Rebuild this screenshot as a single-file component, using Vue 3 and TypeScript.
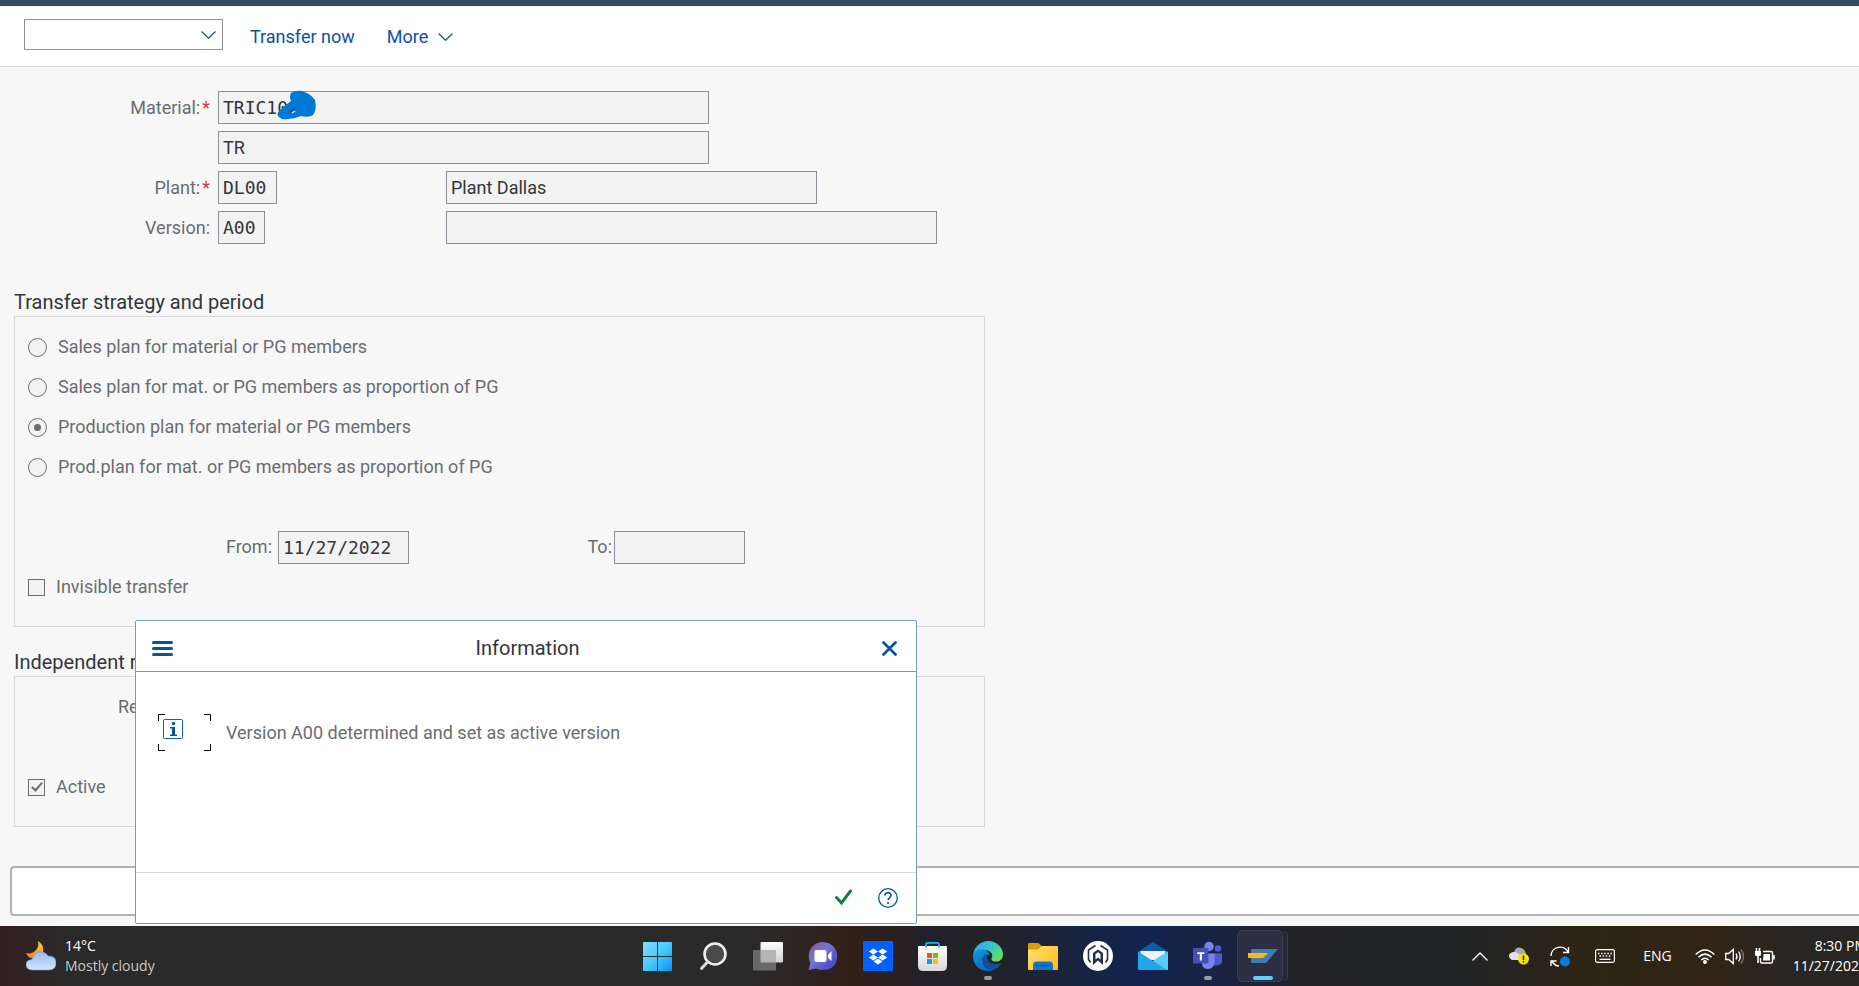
<script setup lang="ts">
import { ref } from 'vue'

interface Strategy {
  id: string
  label: string
}

const strategies: Strategy[] = [
  { id: 'sales', label: 'Sales plan for material or PG members' },
  { id: 'sales-prop', label: 'Sales plan for mat. or PG members as proportion of PG' },
  { id: 'prod', label: 'Production plan for material or PG members' },
  { id: 'prod-prop', label: 'Prod.plan for mat. or PG members as proportion of PG' },
]

const strategy = ref('prod')
const invisible = ref(false)
const active = ref(true)
const command = ref('')
</script>

<template>
  <div class="page">
    <header class="toolbar">
      <div class="combo">
        <select v-model="command" aria-label="Command">
          <option value=""></option>
        </select>
        <svg class="combo-arrow" width="15" height="8" viewBox="0 0 15 8"><path d="M.5 .5 7.5 7.3 14.5 .5" /></svg>
      </div>
      <button class="tool" type="button">Transfer now</button>
      <button class="tool more" type="button">
        More
        <svg width="15" height="8" viewBox="0 0 15 8"><path d="M.5 .5 7.5 7.3 14.5 .5" /></svg>
      </button>
    </header>

    <main class="content">
      <form class="head-form" @submit.prevent>
        <label for="material">Material:<span class="req">*</span></label>
        <div class="wide masked">
          <input id="material" class="field w-long mono" value="TRIC10" readonly />
          <svg class="scribble" width="40" height="32" viewBox="0 0 40 32">
            <path fill="#0078d7" d="M14 3Q18 0 25 1Q34 4 38 10Q40 20 36 25Q32 28 24 26Q15 30 5 29Q-2 26 2 21Q8 15 14 11Q12 6 14 3Z" />
            <path d="M13 22l4-3 1 1" fill="none" stroke="#243d5c" stroke-width="1.2" />
            <path d="M15 23l3-2" stroke="#f2f2f2" stroke-width="1.2" />
            <path d="M31 18l1-1" stroke="#2f5f96" />
          </svg>
        </div>

        <input class="field w-long below" value="TR" aria-label="Material description" readonly />

        <label for="plant">Plant:<span class="req">*</span></label>
        <input id="plant" class="field w-plant mono" value="DL00" readonly />
        <input class="field w-name" value="Plant Dallas" aria-label="Plant name" readonly />

        <label for="version">Version:</label>
        <input id="version" class="field w-version mono" value="A00" readonly />
        <input class="field w-long" value="" aria-label="Version description" readonly />
      </form>

      <section class="group first">
        <h2>Transfer strategy and period</h2>
        <div class="box">
          <label v-for="s in strategies" :key="s.id" class="row option">
            <input v-model="strategy" type="radio" name="strategy" :value="s.id" />
            <span>{{ s.label }}</span>
          </label>
          <div class="row"></div>
          <div class="row period">
            <label class="from" for="from">From:</label>
            <input id="from" class="field w-date mono" value="11/27/2022" readonly />
            <label class="to" for="to">To:</label>
            <input id="to" class="field w-date mono" value="" readonly />
          </div>
          <label class="row option">
            <input v-model="invisible" type="checkbox" />
            <span>Invisible transfer</span>
          </label>
        </div>
      </section>

      <section class="group">
        <h2>Independent requirements</h2>
        <div class="box">
          <div class="row reqtype">Requirements type:</div>
          <div class="row"></div>
          <label class="row option">
            <input v-model="active" type="checkbox" />
            <span>Active</span>
          </label>
        </div>
      </section>

      <div class="status" role="status"></div>

      <section class="dialog" role="dialog" aria-labelledby="dialog-title">
        <header class="dialog-head">
          <button type="button" aria-label="Menu">
            <svg width="21" height="15" viewBox="0 0 21 15"><path d="M1.5 1.5h18M1.5 7.5h18M1.5 13.5h18" stroke="#0854a0" stroke-width="3" stroke-linecap="round" /></svg>
          </button>
          <h3 id="dialog-title">Information</h3>
          <button type="button" aria-label="Close">
            <svg width="15" height="15" viewBox="0 0 15 15"><path d="M1.5 1.5l12 12M13.5 1.5l-12 12" stroke="#0854a0" stroke-width="2.8" stroke-linecap="round" /></svg>
          </button>
        </header>
        <div class="dialog-body">
          <svg width="53" height="37" viewBox="0 0 53 37" fill="none">
            <path d="M7 .5H.5V7M46 .5h6.500V7M.5 30v6.500H7M52.500 30v6.500H46" stroke="#000" />
            <rect x="5.500" y="5.500" width="19" height="19" rx="1" stroke="#0a63b4" />
            <circle cx="15.500" cy="9.500" r="1.700" fill="#0854a0" />
            <path d="M12 13h5v7.500h2V22h-7v-1.500h2V14.500h-2Z" fill="#0854a0" />
          </svg>
          <p>Version A00 determined and set as active version</p>
        </div>
        <footer class="dialog-foot">
          <button type="button" aria-label="Continue">
            <svg width="17" height="17" viewBox="0 0 17 17"><path d="M1.500 8.500 6.500 14 15.500 2" fill="none" stroke="#107e3e" stroke-width="3" stroke-linecap="round" /></svg>
          </button>
          <button type="button" aria-label="Help">
            <svg width="20" height="20" viewBox="0 0 20 20" fill="none" stroke="#0854a0">
              <circle cx="10" cy="10" r="9.300" stroke-width="1.300" />
              <path d="M6.900 7.600C6.900 3.700 13.100 3.800 13.100 7.300C13.100 9.500 10.100 9.600 10.100 12.300" stroke-width="1.600" />
              <circle cx="10.100" cy="15" r="1.100" fill="#0854a0" stroke="none" />
            </svg>
          </button>
        </footer>
      </section>
    </main>

    <footer class="taskbar">
      <button class="weather" type="button">
        <svg width="30" height="30" viewBox="0 0 30 30">
          <defs>
            <linearGradient id="moon" x1="0" y1="1" x2="1" y2="0"><stop offset="0" stop-color="#f47c16" /><stop offset="1" stop-color="#f7c948" /></linearGradient>
            <linearGradient id="cloud" x1="0" y1="0" x2="0" y2="1"><stop offset="0" stop-color="#98b8f1" /><stop offset="1" stop-color="#d2e5fb" /></linearGradient>
          </defs>
          <path d="M12 0C19 4 19 13 13 16Q3 20 0 12C7 14 14 8 12 0Z" fill="url(#moon)" />
          <path d="M6 29Q0 28.500 0 23.500Q0 19 6 18.500Q8 11 15 11Q20 11 22 15Q30 14.500 30 22Q30 29 23 29Z" fill="url(#cloud)" stroke="#779de2" stroke-width=".6" />
        </svg>
        <span class="weather-text"><span>14°C</span><span class="dim">Mostly cloudy</span></span>
      </button>

      <nav class="apps" aria-label="Applications">
        <button type="button" aria-label="Start">
          <svg viewBox="0 0 30 30"><defs><linearGradient id="win" x1="0" y1="0" x2="1" y2="1"><stop offset="0" stop-color="#83dcff" /><stop offset=".5" stop-color="#49c9fb" /><stop offset="1" stop-color="#0a8fff" /></linearGradient></defs><path d="M0 2q0-1 1-1h13v14H0ZM15 1h13q1 0 1 1v13H15ZM0 16h14v14H1q-1 0-1-1ZM15 16h14v13q0 1-1 1H15Z" fill="url(#win)" /></svg>
        </button>
        <button type="button" aria-label="Search">
          <svg viewBox="0 0 30 30"><circle cx="17" cy="13" r="10.500" fill="#4a4a4a" stroke="#eceff1" stroke-width="2.600" /><path d="M9.500 21 3.500 27.500" stroke="#d9dde0" stroke-width="3" stroke-linecap="round" /></svg>
        </button>
        <button type="button" aria-label="Task view">
          <svg viewBox="0 0 30 30"><defs><linearGradient id="tv" x1="0" y1="0" x2="0" y2="1"><stop offset="0" stop-color="#fff" /><stop offset="1" stop-color="#cfcfcf" /></linearGradient></defs><rect x="7.500" y="1" width="22.500" height="20.500" rx="1" fill="url(#tv)" /><rect y="9" width="23" height="20.500" rx="1" fill="#696969" /><path d="M7.500 9H22q1 0 1 1V21.500H8.500q-1 0-1-1Z" fill="#b5b5b5" /></svg>
        </button>
        <button type="button" aria-label="Chat">
          <svg viewBox="0 0 30 30"><defs><linearGradient id="chat" x1=".1" y1=".1" x2=".8" y2=".8"><stop offset="0" stop-color="#8a5ca4" /><stop offset=".45" stop-color="#7177d6" /><stop offset="1" stop-color="#4f4fc6" /></linearGradient></defs><path d="M15 1C34 2 34 29 15 29Q11 29 8 27.500L1.500 29Q.5 29 .7 28L2.500 22C-2.500 12 4 1 15 1Z" fill="url(#chat)" /><rect x="6.500" y="9" width="12" height="12" rx="2" fill="#fff" /><path d="M20 14l3.500-4v10L20 17Z" fill="#fff" /></svg>
        </button>
        <button type="button" aria-label="Dropbox">
          <svg viewBox="0 0 30 30"><path d="M0 0h30v30H0Z" fill="#0061fe" /><path d="M10.400 7.500 15 10.500l-4.600 3-4.600-3ZM19.600 7.500l4.600 3-4.600 3-4.600-3ZM10.400 13.500l4.600 3-4.600 3-4.600-3ZM19.600 13.500l4.600 3-4.600 3-4.600-3ZM15 17.500l4.600 3-4.600 2.900-4.600-2.900Z" fill="#fff" /></svg>
        </button>
        <button type="button" aria-label="Store">
          <svg viewBox="0 0 30 30"><defs><linearGradient id="bag" x1="0" y1="0" x2="0" y2="1"><stop offset="0" stop-color="#fff" /><stop offset="1" stop-color="#d7d7d7" /></linearGradient></defs><path d="M0 6q0-1 1-1h27q1 0 1 1v19q0 5-5 5H5q-5 0-5-5Z" fill="url(#bag)" /><path d="M8 6.500V3.500Q8 1.800 9.800 1.800h9.400q1.800 0 1.800 1.700v3" fill="none" stroke="#1eb8ee" stroke-width="1.700" /><path d="M9 12h5v5H9Z" fill="#f25022" /><path d="M15 12h5v5h-5Z" fill="#7fba00" /><path d="M9 18h5v5H9Z" fill="#00a4ef" /><path d="M15 18h5v5h-5Z" fill="#ffb900" /></svg>
        </button>
        <button class="running" type="button" aria-label="Edge">
          <svg viewBox="0 0 30 30"><defs><linearGradient id="edge1" x1="0" y1=".2" x2="1" y2=".7"><stop offset="0" stop-color="#2aa8f2" /><stop offset=".5" stop-color="#36c5cc" /><stop offset="1" stop-color="#66e04e" /></linearGradient><linearGradient id="edge2" x1="0" y1="0" x2=".5" y2="1"><stop offset="0" stop-color="#1597e8" /><stop offset="1" stop-color="#0b6dc4" /></linearGradient></defs><path d="M.5 12C2 5 8 0 15 0C24 0 30 7 30 13C30 19 26 21 22 20.500Q18 20 18.500 17.500C21 13 17 9 11 9Q4 9 .5 14Z" fill="url(#edge1)" /><path d="M0 15C2 8 8 7.500 12 9Q16 11 17 14Q12 13 11 17.500C10 22 14 27 20 29.500C8 32 0 25 0 15Z" fill="url(#edge2)" /><path d="M14 12.500Q8.500 15 9 20C10 27 15 30 20 29.300Q25 27.500 28 23Q28 21.500 26 22.500C19 25 12.500 20 14 12.500Z" fill="#10509c" /></svg>
        </button>
        <button type="button" aria-label="File explorer">
          <svg viewBox="0 0 30 30"><defs><linearGradient id="folder" x1="0" y1="0" x2="1" y2="1"><stop offset="0" stop-color="#ffe07a" /><stop offset="1" stop-color="#fdbc13" /></linearGradient></defs><path d="M0 3q0-1 1-1h9q1 0 2 1.500l1.500 1.500v6H0Z" fill="#dd9c06" /><path d="M0 8.500h10L13.500 5H29q1 0 1 1v22q0 1-1 1H1q-1 0-1-1Z" fill="url(#folder)" /><path d="M5 29v-5q0-3.500 3.500-3.500h13q3.500 0 3.500 3.500v5Z" fill="#1576c9" /><path d="M8.500 24.700h13" stroke="#0a4b8c" stroke-width="1.200" /></svg>
        </button>
        <button type="button" aria-label="Launcher">
          <svg viewBox="0 0 30 30" fill="none" stroke="#23304d"><circle cx="15" cy="15" r="15" fill="#fff" stroke="none" /><path d="M12.500 4.500 5.500 9v9.500l2 3M17.500 4.500l7 4.500v9.500l-2 3" stroke-width="1.600" /><path d="M10 24V12l5-3.500L20 12v12l-5-4.500Z" fill="#23304d" stroke="none" /><path d="M12.500 18.500V13L15 11.300l2.500 1.700v5.500L15 16.500Z" fill="#fff" stroke="none" /></svg>
        </button>
        <button type="button" aria-label="Mail">
          <svg viewBox="0 0 30 30"><path d="M0 10.500 15 1l15 9.500v5H0Z" fill="#0f5bab" /><path d="M2.500 10h25v9H2.500Z" fill="#f2f2f2" /><path d="M0 10.500 15 20 30 10.500V28q0 1-1 1H1q-1 0-1-1Z" fill="#22a7ec" /><path d="M30 10.500 15 20l14 9q1 0 1-1Z" fill="#50d0fa" /></svg>
        </button>
        <button class="running" type="button" aria-label="Teams">
          <svg viewBox="0 0 30 30"><circle cx="25" cy="7.500" r="3.200" fill="#5059c9" /><circle cx="16" cy="5.500" r="4.700" fill="#7b83eb" /><path d="M20 12.500h9v7q0 5-6 5h-3Z" fill="#5059c9" /><path d="M9 12.500h12.500V21Q21 28 15 28T9 22Z" fill="#7b83eb" /><rect y="7" width="15.500" height="15.500" rx="1" fill="#474fb8" /><path d="M4.300 11.300h7v1.800H8.800v6.500h-2v-6.500H4.300Z" fill="#fff" /></svg>
        </button>
        <button class="current" type="button" aria-label="SAP GUI">
          <svg viewBox="0 0 30 30"><path d="M3 8h27L18 22H3Z" fill="#427cac" /><path d="M0 12h20l-5 5H0Z" fill="#ffb81c" /></svg>
        </button>
      </nav>

      <div class="tray">
        <button type="button" aria-label="Show hidden icons"><svg width="16" height="9" viewBox="0 0 16 9"><path d="M.5 8.500 8 1l7.500 7.500" fill="none" stroke="#fff" stroke-width="1.300" /></svg></button>
        <button type="button" aria-label="OneDrive"><svg width="20" height="20" viewBox="0 0 20 20"><path d="M3 14Q-1 12 .5 8Q3 6 5 6Q7 0 12 2Q16 3 17 8v6Z" fill="#a9a9a9" /><path d="M3 14Q-1 12 .5 8Q5 4 10 8l4 2v4Z" fill="#e1e1e1" /><circle cx="14.500" cy="13" r="5.500" fill="#ffe100" /><path d="M14.500 9.500v4.500M14.500 15v1.500" stroke="#222" stroke-width="1.500" /></svg></button>
        <button type="button" aria-label="Sync"><svg width="20" height="21" viewBox="0 0 20 21"><path d="M1 10A9 9 0 0 1 18 6M18.500 1v5.500H13M1 20v-5h5.500M2 15.500Q5 20 9 20" fill="none" stroke="#fff" stroke-width="1.400" /><circle cx="15" cy="15.500" r="5" fill="#0a7be0" /></svg></button>
        <button class="keyboard" type="button" aria-label="Touch keyboard"><svg width="20" height="14" viewBox="0 0 20 14" fill="none" stroke="#fff"><rect x=".6" y=".6" width="18.800" height="12.800" rx="1.800" stroke-width="1.200" /><path d="M3 4.500h14M4.500 7h11" stroke-width="1.500" stroke-dasharray="1.500 1.600" /><path d="M4.500 10.300h11" stroke-width="1.300" /></svg></button>
        <button class="lang" type="button">ENG</button>
        <button class="net" type="button" aria-label="Network, volume and battery">
          <svg width="20" height="15" viewBox="0 0 20 15" fill="none" stroke="#fff" stroke-width="1.500"><path d="M.7 5.500Q10-3.500 19.300 5.500M3.500 8.300Q10 2 16.500 8.300M6.300 11Q10 7.500 13.700 11" /><circle cx="10" cy="13" r="1.200" fill="#fff" /></svg>
          <svg width="20" height="17" viewBox="0 0 20 17" fill="none" stroke="#fff" stroke-width="1.300"><path d="M.7 5.500h3L8.300 1.500v14L3.700 11.500h-3Z" /><path d="M11 5.500q2 3 0 6M13.500 3.500q3.500 5 0 10" /><path d="M16 1.500q5 7 0 14" stroke="#777" /></svg>
          <svg width="20" height="17" viewBox="0 0 20 17" fill="none" stroke="#fff"><path d="M8 3.500h8q1.500 0 1.500 1.500v8.500q0 1.500-1.500 1.500H7q-1.500 0-1.500-1.500V10" stroke-width="1.400" /><path d="M8.500 6H15v6.500H8Z" fill="#fff" stroke="none" /><path d="M0 3h6v3.500q0 1.500-1.500 1.500h-3Q0 8 0 6.500Z" fill="#fff" stroke="none" /><path d="M1.500 0v3M4.500 0v3M3 8v7M19 7v4.500" stroke-width="1.600" /></svg>
        </button>
        <button class="clock" type="button"><span>8:30 PM</span><span>11/27/2022</span></button>
      </div>
    </footer>
  </div>
</template>

<style>
html,
body {
  margin: 0;
  overflow: hidden;
}
</style>

<style scoped>
.page {
  display: flex;
  flex-direction: column;
  min-height: 100vh;
  overflow: hidden;
  background: #f7f7f7;
  color: #32363a;
  font: 18px/24px Roboto, "Liberation Sans", sans-serif;
}
button,
input,
select {
  box-sizing: border-box;
  margin: 0;
  font: inherit;
  color: inherit;
}
button {
  display: flex;
  align-items: center;
  padding: 0;
  border: 0;
  background: none;
}
svg {
  display: block;
  flex: none;
}
h2,
h3,
p {
  margin: 0;
  font-weight: 400;
}
h2,
h3 {
  font-size: 20px;
}
.toolbar {
  display: flex;
  align-items: center;
  height: 60px;
  padding: 0 24px;
  border-top: 6px solid #354a5f;
  border-bottom: 1px solid #d9d9d9;
  background: #fff;
}
.combo {
  position: relative;
  width: 199px;
  margin: 0 27px 3px 0;
}
.combo select {
  display: block;
  appearance: none;
  width: 100%;
  height: 31px;
  border: 1px solid #89919a;
  border-radius: 0;
  background: #fff;
}
.combo-arrow {
  position: absolute;
  right: 7px;
  top: 12px;
  pointer-events: none;
}
.toolbar path {
  fill: none;
  stroke: #0854a0;
  stroke-width: 1.2;
}
.tool {
  gap: 10px;
  padding-top: 2px;
  color: #0854a0;
}
.more {
  margin-left: 32px;
}
.content {
  position: relative;
  flex: 1;
}
.head-form {
  display: grid;
  grid-template-columns: 210px 220px auto;
  gap: 7px 8px;
  padding-top: 24px;
  align-items: center;
}
.head-form label {
  text-align: right;
}
label,
.reqtype,
.dialog-body p {
  color: #6a6d70;
}
.req {
  margin-left: 2px;
  color: #d0393c;
}
.wide,
.below {
  grid-column: 2 / 4;
}
.masked {
  position: relative;
}
.scribble {
  position: absolute;
  left: 59px;
  top: -1px;
}
.field {
  display: block;
  height: 33px;
  padding: 0 4px;
  border: 1px solid #89919a;
  border-radius: 0;
  background: #f2f2f2;
  outline: 0;
}
.mono {
  font-family: "DejaVu Sans Mono", "Liberation Mono", monospace;
}
.w-long {
  width: 491px;
}
.w-name {
  width: 371px;
}
.w-plant {
  width: 59px;
}
.w-version {
  width: 47px;
}
.w-date {
  width: 131px;
}
.group {
  width: 971px;
  margin: 23px 0 0 14px;
}
.group.first {
  margin-top: 46px;
}
.box {
  margin-top: 2px;
  padding: 10px 13px 19px;
  border: 1px solid #d9d9d9;
}
.row {
  display: flex;
  align-items: center;
  height: 40px;
}
.option {
  gap: 11px;
}
.option input {
  display: grid;
  place-items: center;
  appearance: none;
  width: 17px;
  height: 17px;
  border: 1px solid #6a6d70;
  background: #f2f2f2;
}
.option input[type="radio"] {
  width: 19px;
  height: 19px;
  border-radius: 50%;
}
.option input[type="radio"]:checked::before {
  content: "";
  width: 7px;
  height: 7px;
  border-radius: 50%;
  background: #6a6d70;
}
.option input[type="checkbox"]:checked::before {
  content: "";
  width: 4px;
  height: 9px;
  margin-bottom: 3px;
  border: solid #6a6d70;
  border-width: 0 2px 2px 0;
  transform: rotate(40deg);
}
.from {
  width: 244px;
  margin-right: 6px;
  text-align: right;
}
.to {
  width: 203px;
  margin-right: 2px;
  text-align: right;
}
.reqtype {
  padding-left: 90px;
}
.status {
  height: 46px;
  margin: 39px 0 9px 10px;
  border: 2px solid #b2b2b2;
  border-right: 0;
  border-radius: 4px 0 0 4px;
  background: #fff;
}
.dialog {
  position: absolute;
  left: 135px;
  bottom: 2px;
  width: 780px;
  border: 1px solid #7b98b8;
  border-radius: 2px;
  background: #fff;
}
.dialog-head {
  display: flex;
  align-items: center;
  justify-content: space-between;
  box-sizing: border-box;
  height: 51px;
  padding: 4px 19px 0 16px;
  border-bottom: 1px solid #7b98b8;
}
.dialog-body {
  display: flex;
  align-items: flex-start;
  gap: 15px;
  height: 158px;
  padding: 42px 22px 0;
}
.dialog-body p {
  padding-top: 7px;
}
.dialog-foot {
  display: flex;
  align-items: center;
  justify-content: flex-end;
  gap: 26px;
  height: 49px;
  padding: 0 18px 1px;
  border-top: 1px solid #d9d9d9;
}
.taskbar {
  display: grid;
  grid-template-columns: 1fr auto 1fr;
  align-items: center;
  /* the bar runs on past the right edge of the window */
  margin-right: -66px;
  height: 60px;
  color: #fff;
  font: 14px/20px "Open Sans", "Noto Sans", sans-serif;
  background: linear-gradient(90deg, #33201d 0, #2a2a2a 70px, #2a2a2a 740px, #312018 850px, #22202a 930px, #232325 980px, #112450 1140px, #1a2342 1220px, #232326 1300px, #222426 1460px, #2c2516 1580px, #322415 1710px, #282624 1800px);
}
.weather {
  gap: 9px;
  margin-left: 26px;
  text-align: left;
}
.weather-text {
  display: flex;
  flex-direction: column;
}
.dim {
  color: #c8c8c8;
}
.apps {
  display: flex;
  align-items: center;
  gap: 25px;
}
.apps button {
  position: relative;
}
.apps svg {
  width: 30px;
  height: 30px;
}
.running::after,
.current::after {
  content: "";
  position: absolute;
  left: 11px;
  bottom: -9px;
  width: 8px;
  height: 4px;
  border-radius: 2px;
  background: #9a9a9f;
}
.apps .current {
  width: 44px;
  height: 50px;
  margin-left: -10px;
  padding-left: 10px;
  border-radius: 5px;
  background: #2c2e44;
  box-shadow: 0 0 0 1px #3b3d50, 5px 0 0 #26283a, 6px 0 0 #3b3d50;
}
.current::after {
  left: 15px;
  bottom: 1px;
  width: 20px;
  background: #60cdff;
}
.tray {
  display: flex;
  align-items: center;
  justify-content: flex-end;
  gap: 21px;
  padding-right: 58px;
}
.keyboard {
  margin-left: 4px;
}
.lang {
  margin-left: 7px;
}
.net {
  gap: 10px;
  margin-left: 2px;
}
.tray .clock {
  flex-direction: column;
  align-items: flex-end;
  margin-left: -3px;
}
</style>
